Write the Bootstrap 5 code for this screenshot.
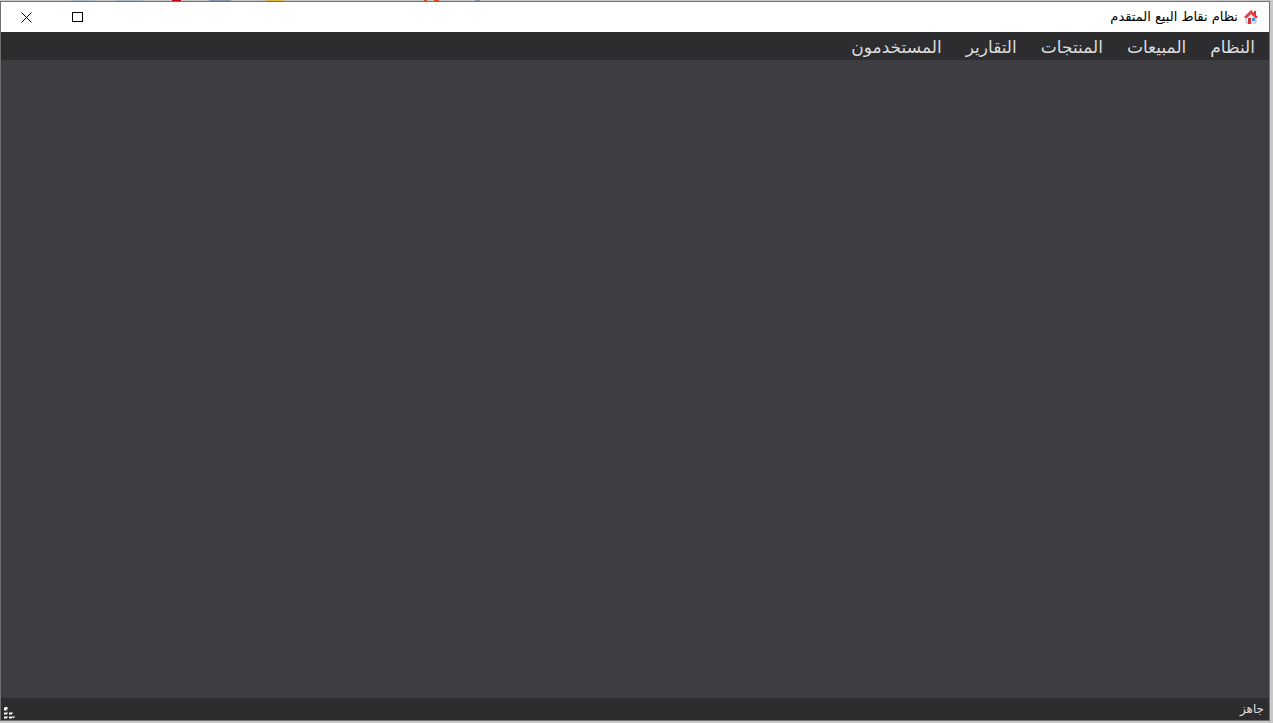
<!DOCTYPE html>
<html lang="ar" dir="rtl">
<head>
<meta charset="utf-8">
<meta name="viewport" content="width=device-width, initial-scale=1">
<title>نظام نقاط البيع المتقدم</title>
<link href="https://cdn.jsdelivr.net/npm/bootstrap@5.3.0/dist/css/bootstrap.min.css" rel="stylesheet">
<style>
.desktop{
  font-family:"DejaVu Sans","Liberation Sans",sans-serif;
  padding:1px 3px 2px 0;
  direction:ltr;
  background:#c8c8c8 linear-gradient(to right,#c8c8c8 71px,#aebccb 71px 94px,#c8c8c8 94px 115px,#aebccb 115px 143px,#c8c8c8 143px 172px,#c00010 172px 181px,#c8c8c8 181px 209px,#8797ae 209px 231px,#c8c8c8 231px 265px,#dcb448 265px 284px,#c8c8c8 284px 424px,#d05020 424px 427px,#c8c8c8 427px 434px,#d05020 434px 439px,#c8c8c8 439px 475px,#8797ae 475px 480px,#c8c8c8 480px) top/100% 1px no-repeat;
}
.app-window{direction:rtl;border:1px solid #707070;background:#3e3d42}
.title-bar{height:30px;background:#fff;color:#000;font-size:13px;padding-right:11px}
.title-group{gap:6px}
.window-btn{width:51px;height:30px;border:0;background:none}
.menu-bar{background:#2d2d30;height:28px;padding:2px 2px 0}
.menu-bar .nav-link{color:#dcdcdc;font-size:17px;line-height:26px;padding:0 12px}
.status-bar{background:#2d2d30;color:#dcdcdc;font-size:12px;line-height:22px;height:22px;padding:0 5px 0 2px}
</style>
</head>
<body class="desktop vh-100 overflow-hidden">
<div class="app-window d-flex flex-column h-100">
  <header class="title-bar d-flex align-items-center justify-content-between">
    <div class="title-group d-flex align-items-center">
      <svg width="14" height="14" viewBox="0 0 14 14" aria-hidden="true">
        <path d="M2 7v6h10V7L7 2z" fill="#e4ecf5" stroke="#a9bacb"/>
        <path d="M10 1h2v5l-2-2z" fill="#c83840"/>
        <path d="M0 7 7 0l7 7-1 1h-2L7 4 3 8H1z" fill="#e53d3d"/>
        <path d="M4 8h3v6H4z" fill="#d83434"/>
        <path d="M8 8h3v3H8z" fill="#4c8fd0"/>
      </svg>
      <span>نظام نقاط البيع المتقدم</span>
    </div>
    <div class="d-flex">
      <button type="button" class="window-btn d-flex align-items-center justify-content-center p-0" aria-label="تكبير">
        <svg width="11" height="11" viewBox="0 0 11 11"><path d="M.5.5h10v9H.5z" fill="none" stroke="#000" shape-rendering="crispEdges"/></svg>
      </button>
      <button type="button" class="window-btn d-flex align-items-center justify-content-center p-0" aria-label="إغلاق">
        <svg width="11" height="11" viewBox="0 0 11 11"><path d="m.5.5 10 10M10.500.5l-10 10" stroke="#000"/></svg>
      </button>
    </div>
  </header>
  <nav class="menu-bar nav flex-nowrap">
    <a class="nav-link" href="#">النظام</a>
    <a class="nav-link" href="#">المبيعات</a>
    <a class="nav-link" href="#">المنتجات</a>
    <a class="nav-link" href="#">التقارير</a>
    <a class="nav-link" href="#">المستخدمون</a>
  </nav>
  <main class="flex-grow-1"></main>
  <footer class="status-bar d-flex justify-content-between align-items-center">
    <span>جاهز</span>
    <svg width="12" height="14" viewBox="0 0 12 14" class="align-self-end" aria-hidden="true">
      <path d="M1 1h4v3H4v1H1zM1 6h4v2H4v1H1zM6 6h4v2H9v1H6zM1 10h4v2H4v1H1zM6 10h4v2H9v1H6zM10 10h2v2h-2z" fill="#8c8c8c"/>
      <path d="M1 2h2v2H1zM2 1h2v2H2zM1 7h3v1H1zM6 7h3v1H6zM1 11h3v1H1zM6 11h3v1H6zM10 11h1v1h-1z" fill="#fff"/>
    </svg>
  </footer>
</div>
<script src="https://cdn.jsdelivr.net/npm/bootstrap@5.3.0/dist/js/bootstrap.bundle.min.js"></script>
</body>
</html>
